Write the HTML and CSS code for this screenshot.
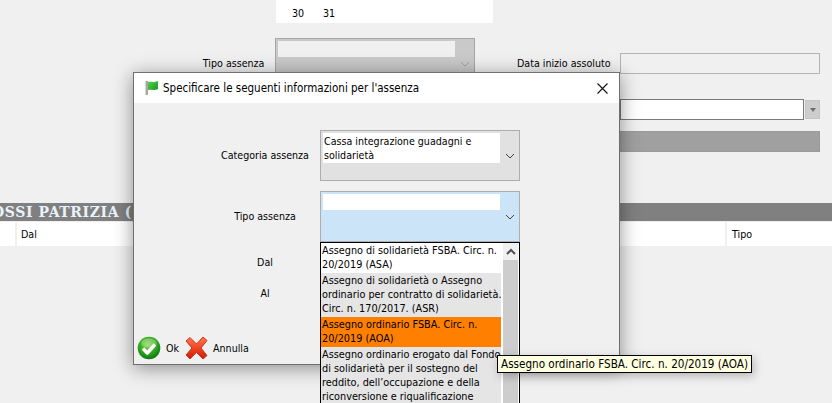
FILE: index.html
```html
<!DOCTYPE html>
<html lang="it">
<head>
<meta charset="utf-8">
<title>Assenza</title>
<link rel="stylesheet" href="styles.css">
</head>
<body>
<div class="page">
  <div class="calendar"><span class="day">30</span><span class="day">31</span></div>

  <div class="form">
    <div class="form-left">
      <span class="form-label">Tipo assenza</span>
      <div class="back-select">
        <div class="back-field"></div>
        <svg class="chev back-chev" width="10" height="6" viewBox="0 0 10 6"><path d="M1 1l4 4 4-4" fill="none" stroke="#a0a0a0"/></svg>
      </div>
    </div>
    <div class="form-right">
      <div class="right-row">
        <span class="right-label">Data inizio assoluto</span>
        <div class="ro-input"></div>
      </div>
      <div class="combo">
        <div class="combo-input"></div>
        <div class="combo-btn"><span class="combo-arrow"></span></div>
      </div>
      <div class="gray-bar"></div>
    </div>
  </div>

  <div class="table-title">OSSI PATRIZIA (</div>
  <div class="table-head">
    <div class="th th-first"></div>
    <div class="th th-dal">Dal</div>
    <div class="th th-tipo">Tipo</div>
  </div>

  <div class="dialog">
    <div class="titlebar">
      <svg class="flag" width="15" height="16" viewBox="0 0 15 16">
        <defs><linearGradient id="fg" x1="0" y1="0" x2="1" y2="1"><stop offset="0" stop-color="#5fd04a"/><stop offset="1" stop-color="#0f9a20"/></linearGradient></defs>
        <rect x="1" y="1" width="3" height="14" fill="#a8a8a0"/>
        <rect x="1" y="1" width="1" height="14" fill="#d8d8d0"/>
        <path d="M4 2c3-1 4 1 10-1v8c-5 2-7 0-10 1z" fill="url(#fg)"/>
      </svg>
      <span class="title-text">Specificare le seguenti informazioni per l'assenza</span>
      <svg class="close" width="11" height="11" viewBox="0 0 11 11"><path d="M.5.5l10 10M10.500.5l-10 10" stroke="#111" stroke-width="1.100" fill="none"/></svg>
    </div>
    <div class="dialog-body">
      <div class="field">
        <span class="field-label field-label-up">Categoria assenza</span>
        <div class="select">
          <div class="select-text select-text-tall">Cassa integrazione guadagni e<br>solidarietà</div>
          <svg class="chev" width="10" height="6" viewBox="0 0 10 6"><path d="M1 1l4 4 4-4" fill="none" stroke="#444"/></svg>
        </div>
      </div>
      <div class="field field-last">
        <span class="field-label field-label-up">Tipo assenza</span>
        <div class="select select-focus">
          <div class="select-text"></div>
          <svg class="chev" width="10" height="6" viewBox="0 0 10 6"><path d="M1 1l4 4 4-4" fill="none" stroke="#444"/></svg>
        </div>
      </div>
      <div class="date-row"><span class="field-label">Dal</span></div>
      <div class="date-row"><span class="field-label">Al</span></div>
    </div>
    <div class="footer">
      <button class="action" type="button">
        <svg width="24" height="24" viewBox="0 0 24 24">
          <defs>
            <radialGradient id="okg" cx=".45" cy=".35" r=".7"><stop offset="0" stop-color="#8ad84f"/><stop offset=".55" stop-color="#2fa81f"/><stop offset="1" stop-color="#0a6e14"/></radialGradient>
          </defs>
          <circle cx="12" cy="12" r="11.300" fill="url(#okg)"/>
          <ellipse cx="12" cy="7" rx="8" ry="4.500" fill="#fff" opacity=".25"/>
          <path d="M6 12.500l4.300 4.500L18 8.500" fill="none" stroke="#fff" stroke-width="3.400" stroke-linejoin="round"/>
        </svg>
        <span>Ok</span>
      </button>
      <button class="action action-cancel" type="button">
        <svg width="23" height="24" viewBox="0 0 23 24">
          <defs>
            <linearGradient id="xg" x1="0" y1="0" x2="0" y2="1"><stop offset="0" stop-color="#ff7a50"/><stop offset=".6" stop-color="#ee3a1c"/><stop offset="1" stop-color="#c4200e"/></linearGradient>
          </defs>
          <path d="M1 5L5 1.500 11.500 8 18 1l4 3.500L16 12l6 7.500-4 3.500-6.500-6.500L5 23l-4-4 6-7z" fill="url(#xg)" stroke="#c8381e" stroke-width="1" stroke-linejoin="round"/>
        </svg>
        <span>Annulla</span>
      </button>
    </div>
    <div class="listbox">
      <div class="list-items">
        <div class="item">Assegno di solidarietà FSBA. Circ. n.<br>20/2019 (ASA)</div>
        <div class="item item-alt">Assegno di solidarietà o Assegno<br>ordinario per contratto di solidarietà.<br>Circ. n. 170/2017. (ASR)</div>
        <div class="item item-sel">Assegno ordinario FSBA. Circ. n.<br>20/2019 (AOA)</div>
        <div class="item item-alt">Assegno ordinario erogato dal Fondo<br>di solidarietà per il sostegno del<br>reddito, dell’occupazione e della<br>riconversione e riqualificazione</div>
      </div>
      <div class="scrollbar">
        <div class="scroll-up"><svg width="10" height="7" viewBox="0 0 10 7"><path d="M1 6l4-4 4 4" fill="none" stroke="#505050" stroke-width="2"/></svg></div>
        <div class="scroll-thumb"></div>
      </div>
    </div>
  </div>

  <div class="tooltip">Assegno ordinario FSBA. Circ. n. 20/2019 (AOA)</div>
</div>
</body>
</html>
```
FILE: styles.css
```css
* { box-sizing: border-box; }
html, body { margin: 0; padding: 0; }
body {
  background: #f0f0f0;
  font-family: "DejaVu Sans Condensed", "Liberation Sans", sans-serif;
  font-size: 10.6px;
  line-height: 14px;
  color: #000;
  overflow: hidden;
}
.page { position: relative; width: 832px; height: 403px; overflow: hidden; }

.calendar {
  display: flex;
  margin-left: 276px;
  width: 217px;
  height: 23px;
  background: #fff;
  padding: 6px 0 0 16px;
  gap: 17px;
}
.day { width: 14px; }

.form { display: flex; margin-top: 15px; height: 165px; }
.form-left { display: flex; width: 475px; }
.form-label { width: 265px; margin-top: 18px; text-align: right; white-space: nowrap; }
.back-select {
  position: relative;
  margin-left: 11px;
  width: 200px;
  height: 51px;
  background: #c9c9c9;
  border: 1px solid #a6a6a6;
  padding: 2px;
}
.back-field { width: 177px; height: 16px; background: #f0f0f0; }
.back-chev { position: absolute; right: 4px; top: 22px; }
.form-right { display: flex; flex-direction: column; margin-left: 42px; }
.right-row { display: flex; margin-top: 15px; }
.right-label { width: 103px; margin-top: 3px; white-space: nowrap; }
.ro-input { width: 200px; height: 21px; border: 1px solid #b4b4b4; background: #f0f0f0; }
.combo { display: flex; margin: 25px 0 0 103px; }
.combo-input { width: 184px; height: 21px; background: #fff; border: 1px solid #7a7a7a; }
.combo-btn {
  display: flex; align-items: center; justify-content: center;
  width: 15px; height: 19px; margin: 1px 0 0 1px;
  background: #cdcdcd;
  border: 1px solid #c4c4c4;
}
.combo-arrow { width: 0; height: 0; border: 3px solid transparent; border-top: 4px solid #6e6e6e; border-bottom: 0; }
.gray-bar { margin: 11px 0 0 103px; width: 200px; height: 21px; background: #a0a0a0; border: 1px solid #9a9a9a; }

.table-title {
  height: 18px;
  background: #808080;
  color: #eaf2fa;
  font-family: "DejaVu Serif", "Liberation Serif", serif;
  font-weight: bold;
  font-size: 14px;
  line-height: 19px;
  text-indent: -8px;
  letter-spacing: .6px;
  white-space: nowrap;
  overflow: hidden;
}
.table-head { display: flex; height: 24px; margin-top: 1px; background: #fff; line-height: 24px; }
.th { border-right: 2px solid #f0f0f0; padding-left: 4px; }
.th-first { width: 17px; padding: 0; }
.th-dal { width: 710px; }
.th-tipo { border: 0; padding-left: 5px; }

.dialog {
  position: absolute;
  left: 133px;
  top: 72px;
  width: 487px;
  height: 293px;
  display: flex;
  flex-direction: column;
  background: #f0f0f0;
  border: 1px solid #6f6f6f;
  box-shadow: 0 3px 18px rgba(0, 0, 0, .42);
}
.titlebar { display: flex; align-items: center; height: 30px; background: #fff; padding-left: 10px; flex: none; }
.flag { flex: none; }
.title-text { margin-left: 4px; font-size: 11.5px; }
.close { margin-left: auto; margin-right: 11px; }
.dialog-body { padding: 27px 0 0 76px; flex: 1; }
.field { display: flex; align-items: center; height: 51px; margin-bottom: 10px; }
.field-last { margin-bottom: 4px; }
.field-label { width: 110px; text-align: center; flex: none; }
.field-label-up { padding-bottom: 2px; }
.date-row { display: flex; align-items: center; height: 31px; }
.select {
  position: relative;
  width: 200px;
  height: 51px;
  background: #e1e1e1;
  border: 1px solid #adadad;
  padding: 2px;
}
.select-focus { background: #cce4f7; }
.select-text { width: 177px; height: 16px; background: #fff; padding-left: 1px; white-space: nowrap; }
.select-text-tall { height: 30px; padding-top: 1px; }
.chev { position: absolute; right: 4px; top: 22px; }

.footer { display: flex; align-items: center; height: 28px; padding: 0 0 4px 3px; flex: none; }
.action {
  display: flex; align-items: center; gap: 5px;
  padding: 0; border: 0; background: none;
  font: inherit; color: inherit;
}
.action-cancel { margin-left: 6px; }

.listbox {
  position: absolute;
  left: 186px;
  top: 169px;
  display: flex;
  width: 200px;
  height: 170px;
  background: #fff;
  border: 1px solid #000;
  font-size: 10.8px;
}
.list-items { width: 180px; flex: none; overflow: hidden; }
.item { padding: 1px 0 1px 1px; white-space: nowrap; }
.item-alt { background: #e5e5e5; }
.item-sel { background: #ff7f00; }
.scrollbar { margin-left: 2px; width: 15px; flex: none; display: flex; flex-direction: column; background: #f0f0f0; }
.scroll-up { display: flex; align-items: center; justify-content: center; height: 17px; }
.scroll-thumb { flex: 1; background: #cdcdcd; }

.tooltip {
  position: absolute;
  left: 497px;
  top: 355px;
  width: 255px;
  height: 18px;
  padding-left: 3px;
  line-height: 16px;
  font-size: 11.6px;
  background: #ffffe1;
  border: 1px solid #000;
  white-space: nowrap;
  box-shadow: 2px 3px 10px rgba(0, 0, 0, .25);
}
```
